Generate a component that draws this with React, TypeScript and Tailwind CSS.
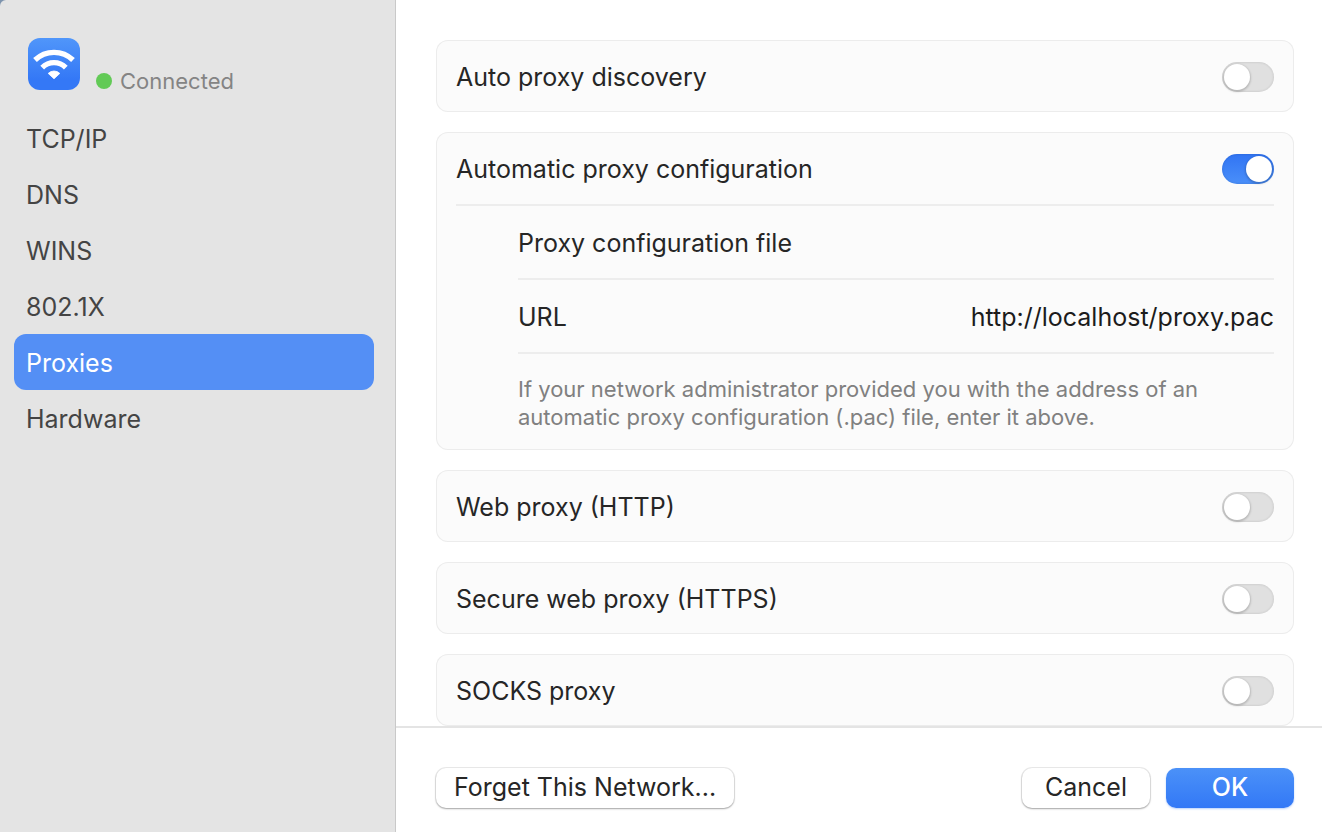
import { useState, type ReactNode } from "react";

const SECTIONS = ["TCP/IP", "DNS", "WINS", "802.1X", "Proxies", "Hardware"];

function WifiBadge() {
  return (
    <svg viewBox="0 0 52 52" className="size-13 shrink-0" role="img" aria-label="Wi-Fi">
      <defs>
        <linearGradient id="wifi-bg" x1="0" y1="0" x2="0" y2="1">
          <stop offset="0" stopColor="#5096fa" />
          <stop offset="0.8" stopColor="#3478f6" />
        </linearGradient>
      </defs>
      <rect width="52" height="52" rx="12" fill="url(#wifi-bg)" />
      <g fill="none" stroke="#fff" strokeWidth="5.3">
        <path d="M7 22A27.3 27.3 0 0 1 45 22" />
        <path d="M14.2 29.6A16.7 16.7 0 0 1 37.8 29.6" />
      </g>
      <path
        d="M20.2 35.4A8.2 8.2 0 0 1 31.8 35.4L26 40.8Z"
        fill="#fff"
        stroke="#fff"
        strokeWidth="0.8"
        strokeLinejoin="round"
      />
    </svg>
  );
}

function Switch({ id, defaultChecked = false }: { id: string; defaultChecked?: boolean }) {
  return (
    <input
      id={id}
      type="checkbox"
      role="switch"
      defaultChecked={defaultChecked}
      className="flex h-[30px] w-[52px] shrink-0 appearance-none items-center rounded-full bg-[#e0e0e0] px-0.5 shadow-[inset_0_0_2px_1px_rgba(0,0,0,0.07)] before:size-[26px] before:rounded-full before:bg-white before:shadow-[0_1px_2px_1px_rgba(0,0,0,0.17)] before:content-[''] checked:justify-end checked:bg-linear-to-b checked:from-[#3174f3] checked:to-[#4a8ff9]"
    />
  );
}

function Card({ children }: { children: ReactNode }) {
  return (
    <section className="rounded-xl bg-[#fbfbfb] px-5 inset-ring inset-ring-[#ececec]">
      {children}
    </section>
  );
}

function SwitchRow({ id, label, on }: { id: string; label: string; on?: boolean }) {
  return (
    <div className="flex h-18 items-center justify-between gap-4 pt-0.5">
      <label htmlFor={id}>{label}</label>
      <Switch id={id} defaultChecked={on} />
    </div>
  );
}

export default function App() {
  const [section, setSection] = useState("Proxies");
  const [url, setUrl] = useState("http://localhost/proxy.pac");

  return (
    <div className="flex min-h-screen bg-[#7d93ad] font-['Inter','Liberation_Sans',sans-serif] text-[25px] leading-8 text-[#262626]">
      <aside className="w-99 shrink-0 rounded-tl-md border-r border-[#c9c9c9] bg-[#e4e4e4] pt-[38px] pr-[21px] pl-3.5">
        <div className="flex items-end gap-4 pl-3.5">
          <WifiBadge />
          <p className="flex items-center gap-2 text-[22px] leading-[18px] text-[#848484]">
            <span className="size-4 rounded-full bg-[#62ca56]" />
            Connected
          </p>
        </div>
        <nav className="mt-5 flex flex-col" aria-label="Network settings">
          {SECTIONS.map((name) => (
            <button
              key={name}
              type="button"
              onClick={() => setSection(name)}
              aria-current={name === section ? "page" : undefined}
              className={
                name === section
                  ? "h-14 rounded-xl bg-[#548ff5] px-3 pt-0.5 text-left text-white"
                  : "h-14 rounded-xl px-3 pt-0.5 text-left text-[#444444]"
              }
            >
              {name}
            </button>
          ))}
        </nav>
      </aside>

      <main className="flex min-w-0 flex-1 flex-col bg-white">
        <div className="flex flex-1 flex-col gap-5 pt-10 pr-7 pl-10">
          <Card>
            <SwitchRow id="auto-discovery" label="Auto proxy discovery" />
          </Card>
          <Card>
            <SwitchRow id="auto-config" label="Automatic proxy configuration" on />
            <div className="border-t-2 border-[#ededed] pl-[62px]">
              <h2 className="flex h-18 items-center pt-0.5">Proxy configuration file</h2>
              <div className="flex h-19 items-center justify-between gap-4 border-y-2 border-[#ededed] pt-0.5">
                <label htmlFor="pac-url">URL</label>
                <input
                  id="pac-url"
                  type="text"
                  value={url}
                  onChange={(event) => setUrl(event.target.value)}
                  className="min-w-0 flex-1 bg-transparent text-right text-[#1c1c1c] outline-none"
                />
              </div>
              <p className="max-w-[720px] pt-[21px] pb-[19px] text-[22px] leading-7 text-[#808080]">
                If your network administrator provided you with the address of an automatic proxy
                configuration (.pac) file, enter it above.
              </p>
            </div>
          </Card>
          <Card>
            <SwitchRow id="web-proxy" label="Web proxy (HTTP)" />
          </Card>
          <Card>
            <SwitchRow id="secure-web-proxy" label="Secure web proxy (HTTPS)" />
          </Card>
          <Card>
            <SwitchRow id="socks-proxy" label="SOCKS proxy" />
          </Card>
        </div>

        <footer className="flex items-center gap-4 border-t-2 border-[#e4e4e4] pt-10 pr-7 pb-6 pl-10">
          <button
            type="button"
            className="mr-auto h-10 rounded-[10px] bg-white px-[18px] pb-0.5 shadow-[0_0_0_1px_rgba(0,0,0,0.08),0_1px_2px_rgba(0,0,0,0.3)]"
          >
            Forget This Network...
          </button>
          <button
            type="button"
            className="h-10 w-32 rounded-[10px] bg-white pb-0.5 shadow-[0_0_0_1px_rgba(0,0,0,0.08),0_1px_2px_rgba(0,0,0,0.3)]"
          >
            Cancel
          </button>
          <button
            type="button"
            className="h-10 w-32 rounded-[10px] bg-linear-to-b from-[#4b91f8] to-[#3378f6] pb-0.5 font-medium text-white shadow-[0_1px_2px_rgba(51,120,246,0.35)]"
          >
            OK
          </button>
        </footer>
      </main>
    </div>
  );
}
